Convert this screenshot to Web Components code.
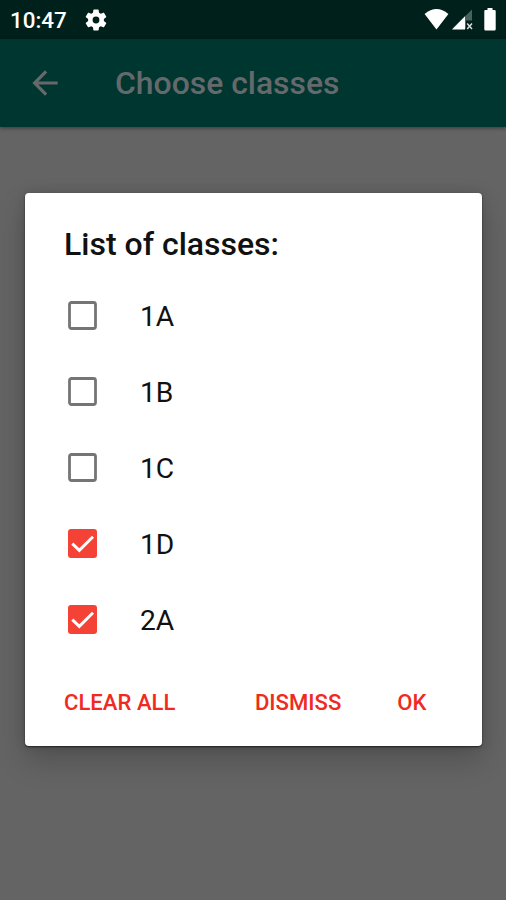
<!DOCTYPE html>
<html lang="en">
<head>
<meta charset="utf-8">
<title>Choose classes</title>
<style>
html, body { margin: 0; height: 100%; }
body { font-family: Roboto, "Liberation Sans", sans-serif; overflow: hidden; }
</style>
</head>
<body>
<app-screen>
  <status-bar slot="top" time="10:47"></status-bar>
  <app-bar slot="top">Choose classes</app-bar>
  <class-dialog>
    <span slot="title">List of classes:</span>
    <check-row>1A</check-row>
    <check-row>1B</check-row>
    <check-row>1C</check-row>
    <check-row checked>1D</check-row>
    <check-row checked>2A</check-row>
    <text-button slot="neutral">CLEAR ALL</text-button>
    <text-button slot="actions">DISMISS</text-button>
    <text-button slot="actions">OK</text-button>
  </class-dialog>
</app-screen>
<script>
function define(name, html) {
  const template = document.createElement('template');
  template.innerHTML = html;
  customElements.define(name, class extends HTMLElement {
    constructor() {
      super();
      this.attachShadow({ mode: 'open' }).append(template.content.cloneNode(true));
    }
    connectedCallback() {
      const time = this.shadowRoot.querySelector('time');
      if (time) time.textContent = this.getAttribute('time');
    }
  });
}

define('app-screen', `
<style>
:host { display: flex; flex-direction: column; width: 506px; height: 900px; background: #646464; }
main { flex: 1; padding: 66px 24px 0 25px; }
</style>
<slot name="top"></slot><main><slot></slot></main>`);

define('status-bar', `
<style>
:host { display: flex; align-items: center; box-sizing: border-box; height: 39px; padding: 0 10px; background: #00201c; color: #fff; }
time { font-size: 22.4px; font-weight: 500; line-height: 26px; width: 75px; }
svg { display: block; flex: none; }
.space { flex: 1; }
</style>
<time></time>
<svg width="22" height="22" viewBox="2 2 20 20" fill="#fff"><path d="M19.14 12.94c.04-.3.06-.61.06-.94s-.02-.64-.07-.94l2.03-1.58a.49.49 0 0 0 .12-.61l-1.92-3.32a.488.488 0 0 0-.59-.22l-2.39.96a7 7 0 0 0-1.62-.94l-.36-2.54a.484.484 0 0 0-.48-.41h-3.84a.47.47 0 0 0-.47.41l-.36 2.54c-.59.24-1.13.57-1.62.94l-2.39-.96a.48.48 0 0 0-.59.22L2.74 8.87a.47.47 0 0 0 .12.61l2.03 1.58c-.05.3-.09.63-.09.94s.02.64.07.94l-2.03 1.58a.49.49 0 0 0-.12.61l1.92 3.32c.12.22.37.29.59.22l2.39-.96c.5.38 1.03.7 1.62.94l.36 2.54c.05.24.24.41.48.41h3.84c.24 0 .44-.17.47-.41l.36-2.54c.59-.24 1.13-.56 1.62-.94l2.39.96c.22.08.47 0 .59-.22l1.92-3.32a.47.47 0 0 0-.12-.61zM12 15.1a3.1 3.1 0 1 1 0-6.2 3.1 3.1 0 0 1 0 6.2z"/></svg>
<span class="space"></span>
<svg width="72" height="24" viewBox="0 0 72 24" fill="#fff">
  <path d="M.6 6Q12.5-4 24.4 6L12.5 21.5Z"/>
  <path d="M48 1.5v11H42v8H28.5Z" fill="#4a625f"/>
  <path d="M28 21.5 41 8.3V21.5Z"/>
  <path d="m43.2 15.6 4.8 5.3m0-5.3-4.8 5.3" fill="none" stroke="#d7dedd" stroke-width="1.5"/>
  <path d="M61.5 2h2V0h5v2h2q1.2 0 1.2 1.2v18q0 1.2-1.2 1.2h-9q-1.2 0-1.2-1.2v-18q0-1.2 1.2-1.2Z"/>
</svg>`);

define('app-bar', `
<style>
:host { display: flex; align-items: center; height: 88px; background: #003630; color: #65696b; box-shadow: 0 1px 4px rgba(0,0,0,.45); }
svg { display: block; margin-left: 26px; margin-right: 51px; }
h1 { margin: 0; font-size: 31.9px; font-weight: 500; line-height: 38px; white-space: nowrap; padding-bottom: 1px; }
</style>
<svg width="38" height="38" viewBox="0 0 24 24" fill="currentColor"><path d="M20 11H7.83l5.59-5.59L12 4l-8 8 8 8 1.41-1.41L7.83 13H20z"/></svg>
<h1><slot></slot></h1>`);

define('class-dialog', `
<style>
:host { display: flex; flex-direction: column; box-sizing: border-box; height: 553px; background: #fff; color: #111; border-radius: 4px; padding: 32px 39px 0; box-shadow: 0 1px 2px rgba(0,0,0,.6), 0 14px 30px rgba(0,0,0,.2), 0 0 12px rgba(0,0,0,.12); }
h2 { margin: 0; font-size: 32px; font-weight: 500; line-height: 38px; height: 15px; padding-bottom: 38px; white-space: nowrap; }
footer { display: flex; justify-content: space-between; padding: 31px 16.5px 0 0; }
.actions { display: flex; gap: 56px; }
</style>
<h2><slot name="title"></slot></h2>
<slot></slot>
<footer><slot name="neutral"></slot><div class="actions"><slot name="actions"></slot></div></footer>`);

define('check-row', `
<style>
:host { display: flex; align-items: center; height: 76px; font-size: 28.2px; line-height: 34px; }
svg { display: block; margin: 0 43px 2px 4px; }
.label { padding-top: 2px; }
.on, :host([checked]) .off { display: none; }
:host([checked]) .on { display: inline; }
</style>
<svg width="29" height="29" viewBox="0 0 29 29">
  <rect class="off" x="1.5" y="1.5" width="26" height="26" rx="2" fill="none" stroke="#757575" stroke-width="2.8"/>
  <g class="on"><rect width="29" height="29" rx="3" fill="#f44336"/><path d="m4.3 14.6 7 6.8L25 7.7" fill="none" stroke="#fff" stroke-width="2.9"/></g>
</svg>
<span class="label"><slot></slot></span>`);

define('text-button', `
<style>
:host { display: block; font-size: 22.1px; font-weight: 500; line-height: 26px; color: #f02a20; white-space: nowrap; }
</style>
<slot></slot>`);
</script>
</body>
</html>
